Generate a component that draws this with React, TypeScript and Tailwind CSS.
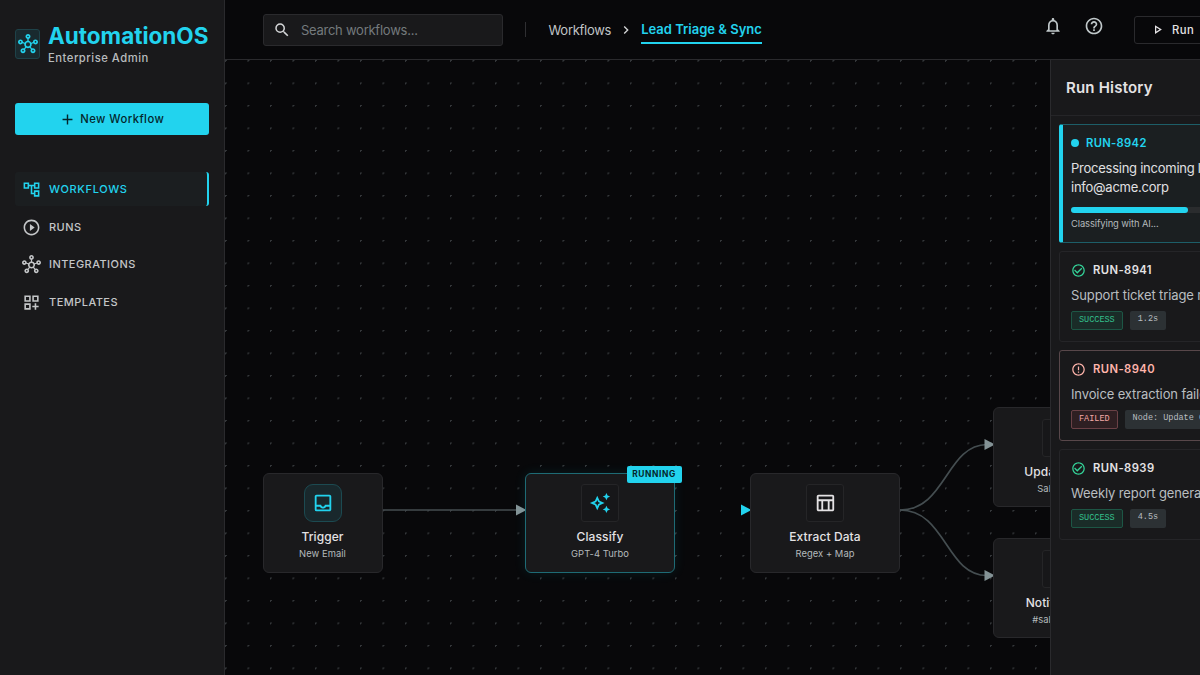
import type { ReactNode } from "react";
import type { IconType } from "react-icons";
import {
  MdAdd,
  MdCheckCircleOutline,
  MdChevronRight,
  MdErrorOutline,
  MdHelpOutline,
  MdNotificationsNone,
  MdOutlineAccountTree,
  MdOutlineAutoAwesome,
  MdOutlineDashboardCustomize,
  MdOutlineHub,
  MdOutlineInbox,
  MdOutlinePlayArrow,
  MdOutlineTableChart,
  MdPlayCircleOutline,
  MdSearch,
} from "react-icons/md";

interface NavItem {
  label: string;
  icon: IconType;
  active?: boolean;
}

const NAV: NavItem[] = [
  { label: "WORKFLOWS", icon: MdOutlineAccountTree, active: true },
  { label: "RUNS", icon: MdPlayCircleOutline },
  { label: "INTEGRATIONS", icon: MdOutlineHub },
  { label: "TEMPLATES", icon: MdOutlineDashboardCustomize },
];

function Sidebar() {
  return (
    <aside className="flex w-[225px] shrink-0 flex-col border-r border-[#2a2a2d] bg-[#19191b] px-[15px] pt-[23px]">
      <div className="flex h-11 items-center gap-2">
        <div className="mb-[2px] flex h-[30px] w-[25px] shrink-0 items-center justify-center rounded-[3px] border border-[#1e4249] bg-[#192a2f] text-[#22d3ee]">
          <MdOutlineHub size={20} className="shrink-0" />
        </div>
        <div>
          <div className="text-[22.5px] leading-[26px] font-bold text-[#22d3ee]">
            AutomationOS
          </div>
          <div className="text-[11.25px] leading-[18px] font-medium tracking-[0.5px] text-[#b8bcbe]">
            Enterprise Admin
          </div>
        </div>
      </div>

      <button className="mt-9 flex h-8 items-center justify-center gap-[4.5px] rounded-[3px] bg-[#22d3ee] pr-px text-[11.25px] font-medium tracking-[0.44px] text-[#04252b]">
        <MdAdd size={17} />
        New Workflow
      </button>

      <nav className="mt-[37px] flex flex-col gap-[3.5px]">
        {NAV.map(({ label, icon: Icon, active }) => (
          <a
            key={label}
            className={`flex h-[34px] items-center gap-2 rounded-[3px] px-[7px] pt-px text-[11px] font-medium ${
              active
                ? "border-r-2 border-[#22d3ee] bg-[#1b1e20] tracking-[0.62px] text-[#22d3ee]"
                : "tracking-[0.45px] text-[#c4c6c8]"
            }`}
          >
            <Icon size={19} />
            {label}
          </a>
        ))}
      </nav>
    </aside>
  );
}

function Header() {
  return (
    <header className="flex h-[60px] shrink-0 items-center border-b border-[#2a2a2d] pl-[37.5px] whitespace-nowrap">
      <div className="flex h-8 w-[240px] shrink-0 items-center gap-[10px] rounded-[3px] border border-[#2a2a2d] bg-[#19191b] pl-[9.4px]">
        <MdSearch size={18} className="text-[#d4d6d8]" />
        <span className="pt-0.5 text-[13px] tracking-[-0.25px] text-[#747a7d]">
          Search workflows...
        </span>
      </div>
      <div className="ml-[22.5px] h-[15px] w-px shrink-0 bg-[#2f2f32]" />
      <div className="ml-[22.5px] flex w-[214px] shrink-0 items-center">
        <span className="pt-0.5 text-[13px] tracking-[-0.28px] text-[#c0c4c6]">
          Workflows
        </span>
        <MdChevronRight
          size={16}
          className="mt-px mr-[7px] ml-[7px] shrink-0 text-[#d4d6d8]"
        />
        <span className="mt-1 border-b-2 border-[#22d3ee] pb-[3px] text-[13px] leading-5 font-semibold text-[#22d3ee]">
          Lead Triage & Sync
        </span>
      </div>
      <div className="-mt-[7px] ml-[280.4px] flex shrink-0 items-center gap-[21.5px] text-[#c0c8ca]">
        <MdNotificationsNone size={20} />
        <MdHelpOutline size={20} />
      </div>
      <button className="ml-[30px] flex h-7 w-[90px] shrink-0 items-center gap-[6.5px] rounded-[3px] border border-[#2a2a2d] pl-[15px] text-[11.25px] font-medium tracking-[0.5px] text-[#e4e2e4]">
        <MdOutlinePlayArrow size={15} />
        <span className="pt-px">Run</span>
      </button>
    </header>
  );
}

interface FlowNodeProps {
  title: string;
  subtitle: string;
  icon: IconType;
  className: string;
  iconClassName?: string;
  children?: ReactNode;
}

function FlowNode({
  title,
  subtitle,
  icon: Icon,
  className,
  iconClassName = "rounded-[3px] border-[#252527] bg-[#171719]",
  children,
}: FlowNodeProps) {
  return (
    <div
      className={`absolute flex h-[100px] flex-col items-center rounded-md border bg-[#19191b] pt-[10.5px] whitespace-nowrap ${className}`}
    >
      <div
        className={`flex size-[38px] items-center justify-center border ${iconClassName}`}
      >
        <Icon size={22} />
      </div>
      <div className="mt-[6px] text-[12px] leading-[18px] font-medium tracking-[0.1px] text-[#e4e2e4]">
        {title}
      </div>
      <div className="mt-[1px] text-[9.4px] leading-[14px] tracking-[0.05px] text-[#b4babc]">
        {subtitle}
      </div>
      {children}
    </div>
  );
}

function Canvas() {
  return (
    <div className="absolute inset-0 overflow-hidden bg-[radial-gradient(circle_at_0.75px_0.75px,#34373a_0.8px,transparent_0.8px)] bg-[size:22.5px_22.5px]">
      <svg
        className="absolute inset-0"
        width="975"
        height="615"
        fill="none"
        stroke="#444d50"
        strokeWidth="1.7"
      >
        <path d="M158 450H292" />
        <path d="M675 450C721 450 721 385 762 384.5" />
        <path d="M675 450C721 450 721 515.5 762 515.5" />
        <g fill="#849396" stroke="none">
          <path d="M291 444.5L301.5 450L291 455.5Z" />
          <path d="M759.5 379L770 384.5L759.5 390Z" />
          <path d="M759.5 510L770 515.5L759.5 521Z" />
        </g>
        <path d="M516 444.5L526.5 450L516 455.5Z" fill="#22d3ee" stroke="none" />
      </svg>

      <FlowNode
        title="Trigger"
        subtitle="New Email"
        icon={MdOutlineInbox}
        className="top-[412.5px] left-[37.5px] w-[120px] border-[#28282b]"
        iconClassName="rounded-[9px] border-[#1c4a51] bg-[#19282c] text-[#22d3ee]"
      />
      <FlowNode
        title="Classify"
        subtitle="GPT-4 Turbo"
        icon={MdOutlineAutoAwesome}
        className="top-[412.5px] left-[300px] w-[150px] border-[#1e6b75] shadow-[0_0_12px_rgba(34,211,238,0.1)]"
        iconClassName="rounded-[3px] border-[#252527] bg-[#171719] text-[#22d3ee]"
      >
        <span className="absolute -top-2 -right-[7.5px] flex h-[17px] w-[55px] items-center justify-center rounded-[2px] bg-[#22d3ee] text-[8.4px] font-bold tracking-[0.6px] text-[#04252b]">
          RUNNING
        </span>
      </FlowNode>
      <FlowNode
        title="Extract Data"
        subtitle="Regex + Map"
        icon={MdOutlineTableChart}
        className="top-[412.5px] left-[525px] w-[150px] border-[#28282b] text-[#e4e2e4]"
      />
      <FlowNode
        title="Update CRM"
        subtitle="Salesforce"
        icon={MdOutlineHub}
        className="top-[347px] left-[768px] w-[136px] border-[#28282b] text-[#e4e2e4]"
      />
      <FlowNode
        title="Notify Team"
        subtitle="#sales-leads"
        icon={MdNotificationsNone}
        className="top-[478px] left-[768px] w-[136px] border-[#28282b] text-[#e4e2e4]"
      />
    </div>
  );
}

interface Run {
  id: string;
  text: string;
  status: "SUCCESS" | "FAILED";
  detail: string;
}

const RUNS: Run[] = [
  { id: "RUN-8941", text: "Support ticket triage routed", status: "SUCCESS", detail: "1.2s" },
  { id: "RUN-8940", text: "Invoice extraction failed", status: "FAILED", detail: "Node: Update CRM" },
  { id: "RUN-8939", text: "Weekly report generated", status: "SUCCESS", detail: "4.5s" },
];

function RunCard({ run }: { run: Run }) {
  const failed = run.status === "FAILED";
  const StatusIcon = failed ? MdErrorOutline : MdCheckCircleOutline;

  return (
    <div
      className={`h-[91px] rounded-[3px] border px-[11px] pt-[10px] ${
        failed ? "border-[#58474a]" : "border-[#252528]"
      }`}
    >
      <div className="flex h-4 items-center gap-[7px]">
        <StatusIcon
          size={15}
          className={failed ? "text-[#ffb4ab]" : "text-[#34d399]"}
        />
        <span
          className={`text-[11.25px] font-semibold tracking-[0.42px] ${
            failed ? "text-[#ffb4ab]" : "text-[#e4e2e4]"
          }`}
        >
          {run.id}
        </span>
      </div>
      <div className="mt-[7.5px] text-[13px] leading-[19px] tracking-[-0.12px] text-[#b9bec0]">
        {run.text}
      </div>
      <div className="mt-[6.5px] flex gap-[7.5px] font-['Liberation_Mono',monospace] text-[8.5px]">
        <span
          className={`flex h-[19px] items-center rounded-[2px] border px-[7px] pb-px ${
            failed
              ? "border-[#6a4146] bg-[#2e1f22] text-[#f3a9a6]"
              : "border-[#1d5645] bg-[#1a2c28] text-[#34c08d]"
          }`}
        >
          {run.status}
        </span>
        <span className="flex h-[19px] items-center rounded-[2px] bg-[#2c3134] px-[7.5px] pb-[3px] text-[#b9bec0]">
          {run.detail}
        </span>
      </div>
    </div>
  );
}

function RunHistory() {
  return (
    <section className="absolute top-0 left-[825px] h-full w-[240px] border-l border-[#2a2a2d] bg-[#19191b] whitespace-nowrap">
      <div className="flex h-14 items-center border-b border-[#252528] pt-0.5 pl-[15px] text-[15px] font-semibold tracking-[0.2px] text-[#e4e2e4]">
        Run History
      </div>
      <div className="flex flex-col gap-2 pt-2 pl-2">
        <div className="h-[119px] rounded-[3px] border border-l-4 border-[#1d5e68] border-l-[#22d3ee] bg-[#1b1f21] pt-[10px] pl-2">
          <div className="flex h-4 items-center gap-[7.5px]">
            <span className="size-[7.5px] rounded-full bg-[#22d3ee]" />
            <span className="text-[11.25px] font-semibold tracking-[0.3px] text-[#22d3ee]">
              RUN-8942
            </span>
          </div>
          <div className="mt-2 text-[13px] leading-[19px] tracking-[-0.25px] text-[#e0e0e2]">
            Processing incoming lead
            <br />
            info@acme.corp
          </div>
          <div className="mt-[10px] h-1.5 w-[180px] rounded-full bg-[#2a2c2e]">
            <div className="h-full w-[65%] rounded-full bg-[#22d3ee]" />
          </div>
          <div className="mt-1 text-[9.4px] leading-[14px] tracking-[-0.1px] text-[#b4babc]">
            Classifying with AI...
          </div>
        </div>
        {RUNS.map((run) => (
          <RunCard key={run.id} run={run} />
        ))}
      </div>
    </section>
  );
}

export default function App() {
  return (
    <div className="flex h-[675px] w-[1200px] overflow-hidden bg-[#08080a] font-['Inter',sans-serif]">
      <Sidebar />
      <div className="flex w-[975px] shrink-0 flex-col overflow-hidden">
        <Header />
        <main className="relative flex-1 overflow-hidden">
          <Canvas />
          <RunHistory />
        </main>
      </div>
    </div>
  );
}
